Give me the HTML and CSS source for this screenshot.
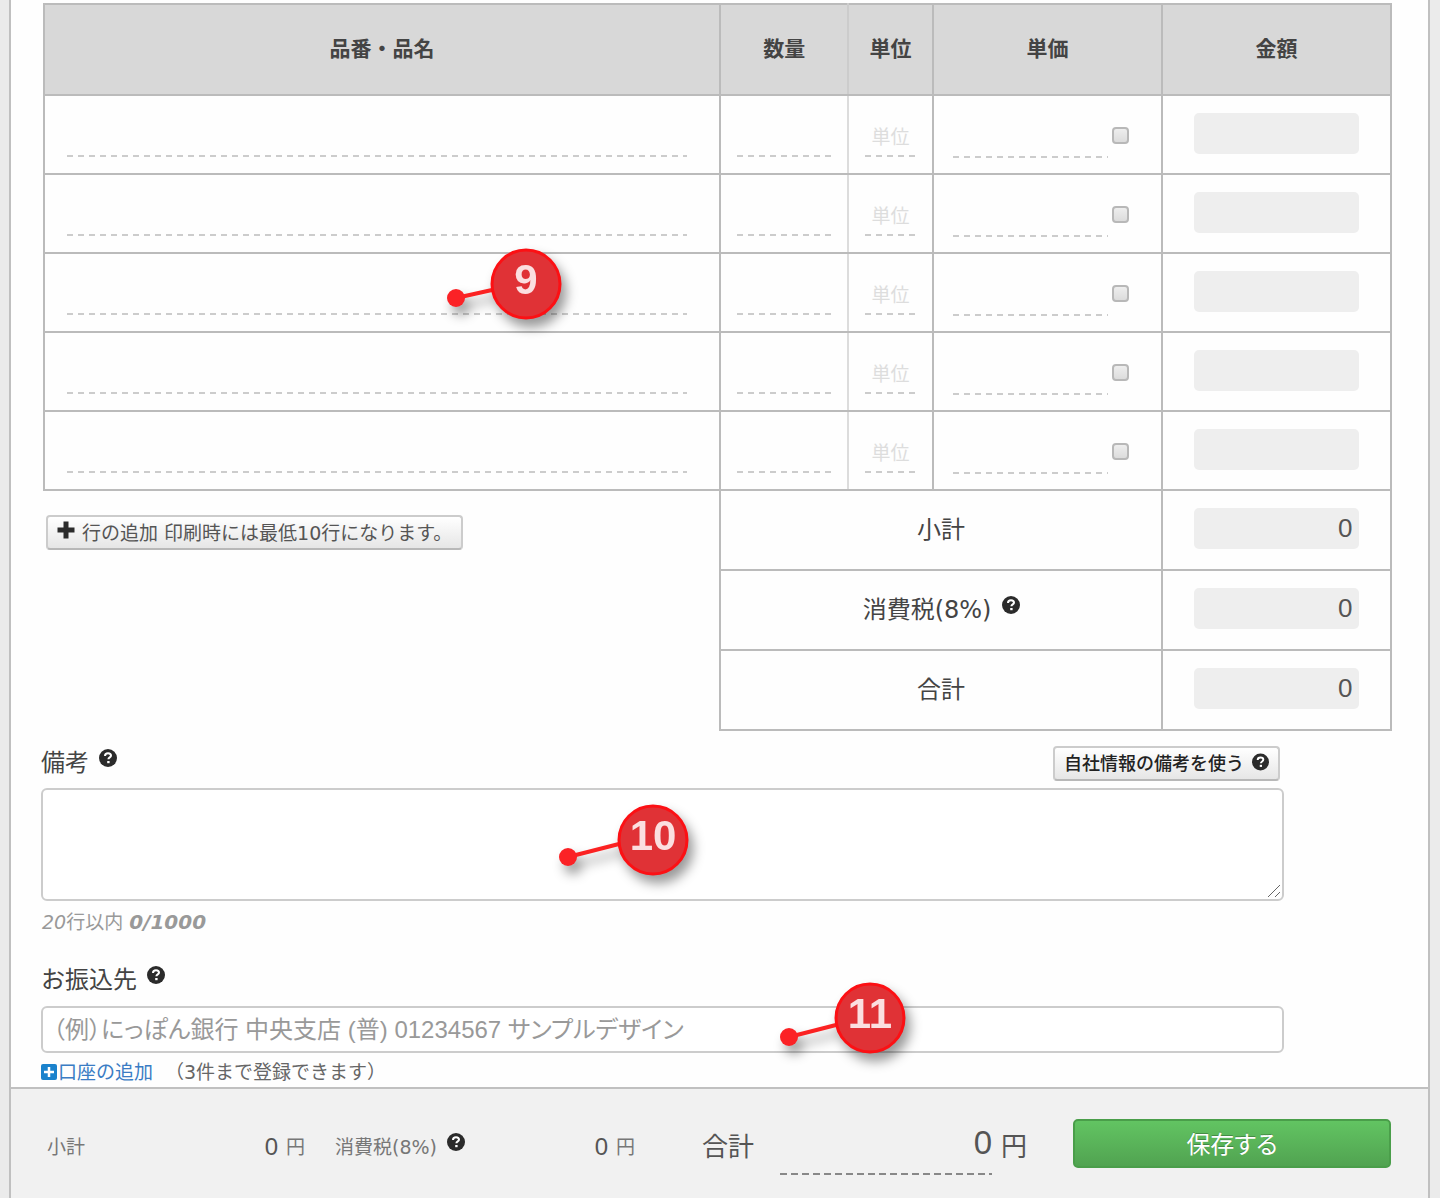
FILE: index.html
```html
<!DOCTYPE html>
<html lang="ja">
<head>
    <meta charset="UTF-8">
    <meta name="viewport" content="width=device-width, initial-scale=1.0">
    <title>請求書の作成</title>
    <link rel="stylesheet" href="styles.css">
</head>
<body>
    <!-- shared icons -->
    <svg class="icon-defs" aria-hidden="true">
        <symbol id="icon-help" viewBox="0 0 18 18">
            <circle cx="9" cy="9" r="9" fill="#2b2b2b"/>
            <path d="M6 6.9C6 5 7.300 4.200 9 4.200S12 5.100 12 6.700C12 8.400 9.400 8.400 9.400 10.300" fill="none" stroke="#fff" stroke-width="2"/>
            <rect x="8.200" y="12" width="2.400" height="2.200" fill="#fff"/>
        </symbol>
        <symbol id="icon-plus" viewBox="0 0 18 18">
            <path d="M6.500 0.500h5v6H17.500v5h-6V17.500h-5v-6h-6v-5h6z" fill="#2b2b2b"/>
        </symbol>
        <symbol id="icon-plus-box" viewBox="0 0 16 16">
            <rect width="16" height="16" rx="2" fill="#1a82cc"/>
            <path d="M8 3v10M3 8h10" stroke="#fff" stroke-width="2.500"/>
        </symbol>
    </svg>

    <form class="sheet">
        <div class="content">
            <table class="items">
                <colgroup>
                    <col class="col-name">
                    <col class="col-qty">
                    <col class="col-unit">
                    <col class="col-price">
                    <col class="col-amount">
                </colgroup>
                <thead>
                    <tr>
                        <th>品番・品名</th>
                        <th class="qty">数量</th>
                        <th class="unit">単位</th>
                        <th>単価</th>
                        <th>金額</th>
                    </tr>
                </thead>
                <tbody>
                    <tr class="item">
                        <td><input type="text" class="line name" aria-label="品番・品名"></td>
                        <td class="qty"><input type="text" class="line" aria-label="数量"></td>
                        <td class="unit"><input type="text" class="line" placeholder="単位" aria-label="単位"></td>
                        <td><div class="price"><input type="text" class="line" aria-label="単価"><input type="checkbox" aria-label="税込"></div></td>
                        <td class="amount"><input type="text" aria-label="金額" readonly></td>
                    </tr>
                    <tr class="item">
                        <td><input type="text" class="line name" aria-label="品番・品名"></td>
                        <td class="qty"><input type="text" class="line" aria-label="数量"></td>
                        <td class="unit"><input type="text" class="line" placeholder="単位" aria-label="単位"></td>
                        <td><div class="price"><input type="text" class="line" aria-label="単価"><input type="checkbox" aria-label="税込"></div></td>
                        <td class="amount"><input type="text" aria-label="金額" readonly></td>
                    </tr>
                    <tr class="item">
                        <td class="marked">
                            <input type="text" class="line name" aria-label="品番・品名">
                            <svg class="marker marker-9" width="120" height="80">
                                <path d="M10 50L46 42" class="marker-lead"/>
                                <circle cx="10" cy="50" r="9" class="marker-dot"/>
                                <circle cx="80" cy="36" r="34" class="marker-disc"/>
                                <text x="80" y="46" class="marker-num">9</text>
                            </svg>
                        </td>
                        <td class="qty"><input type="text" class="line" aria-label="数量"></td>
                        <td class="unit"><input type="text" class="line" placeholder="単位" aria-label="単位"></td>
                        <td><div class="price"><input type="text" class="line" aria-label="単価"><input type="checkbox" aria-label="税込"></div></td>
                        <td class="amount"><input type="text" aria-label="金額" readonly></td>
                    </tr>
                    <tr class="item">
                        <td><input type="text" class="line name" aria-label="品番・品名"></td>
                        <td class="qty"><input type="text" class="line" aria-label="数量"></td>
                        <td class="unit"><input type="text" class="line" placeholder="単位" aria-label="単位"></td>
                        <td><div class="price"><input type="text" class="line" aria-label="単価"><input type="checkbox" aria-label="税込"></div></td>
                        <td class="amount"><input type="text" aria-label="金額" readonly></td>
                    </tr>
                    <tr class="item">
                        <td><input type="text" class="line name" aria-label="品番・品名"></td>
                        <td class="qty"><input type="text" class="line" aria-label="数量"></td>
                        <td class="unit"><input type="text" class="line" placeholder="単位" aria-label="単位"></td>
                        <td><div class="price"><input type="text" class="line" aria-label="単価"><input type="checkbox" aria-label="税込"></div></td>
                        <td class="amount"><input type="text" aria-label="金額" readonly></td>
                    </tr>
                </tbody>
                <tbody>
                    <tr class="sum">
                        <td class="add-row" rowspan="3">
                            <button type="button" class="btn btn-add"><svg class="icon"><use href="#icon-plus"/></svg>行の追加 印刷時には最低10行になります。</button>
                        </td>
                        <td colspan="3"><label for="subtotal">小計</label></td>
                        <td class="amount"><input type="text" id="subtotal" value="0" readonly></td>
                    </tr>
                    <tr class="sum">
                        <td colspan="3">
                            <div class="with-help">
                                <label for="tax">消費税(8%)</label>
                                <svg class="icon"><use href="#icon-help"/></svg>
                            </div>
                        </td>
                        <td class="amount"><input type="text" id="tax" value="0" readonly></td>
                    </tr>
                    <tr class="sum">
                        <td colspan="3"><label for="total">合計</label></td>
                        <td class="amount"><input type="text" id="total" value="0" readonly></td>
                    </tr>
                </tbody>
            </table>

            <div class="group notes">
                <div class="group-head">
                    <div class="with-help">
                        <label for="notes">備考</label>
                        <svg class="icon"><use href="#icon-help"/></svg>
                    </div>
                    <button type="button" class="btn btn-own">自社情報の備考を使う<svg class="icon"><use href="#icon-help"/></svg></button>
                </div>
                <div class="field">
                    <textarea id="notes"></textarea>
                    <svg class="grip" viewBox="0 0 14 14"><path d="M1 13L13 1M8 13L13 8"/></svg>
                    <svg class="marker marker-10" width="140" height="80">
                        <path d="M10 53L61 40" class="marker-lead"/>
                        <circle cx="10" cy="53" r="9" class="marker-dot"/>
                        <circle cx="95" cy="36" r="34" class="marker-disc"/>
                        <text x="95" y="46" class="marker-num">10</text>
                    </svg>
                </div>
                <p class="hint"><em>20</em>行以内 <strong>0/1000</strong></p>
            </div>

            <div class="group bank">
                <div class="group-head">
                    <div class="with-help">
                        <label for="bank">お振込先</label>
                        <svg class="icon"><use href="#icon-help"/></svg>
                    </div>
                </div>
                <div class="field">
                    <input type="text" id="bank" placeholder="（例）にっぽん銀行 中央支店 (普) 01234567 サンプルデザイン">
                    <svg class="marker marker-11" width="140" height="80">
                        <path d="M10 55L57 43" class="marker-lead"/>
                        <circle cx="10" cy="55" r="9" class="marker-dot"/>
                        <circle cx="91" cy="36" r="34" class="marker-disc"/>
                        <text x="91" y="46" class="marker-num">11</text>
                    </svg>
                </div>
                <p class="add-bank">
                    <a href="#"><svg class="icon-box"><use href="#icon-plus-box"/></svg>口座の追加</a>
                    <span>（3件まで登録できます）</span>
                </p>
            </div>
        </div>

        <footer class="footer">
            <div class="foot-item foot-subtotal">
                <span>小計</span>
                <output>0</output>
                <span>円</span>
            </div>
            <div class="foot-item foot-tax">
                <div class="with-help">
                    <span>消費税(8%)</span>
                    <svg class="icon"><use href="#icon-help"/></svg>
                </div>
                <output>0</output>
                <span>円</span>
            </div>
            <div class="foot-item foot-total">
                <label for="grand">合計</label>
                <input type="text" id="grand" class="line" value="0">
                <span>円</span>
            </div>
            <button type="submit" class="btn-save">保存する</button>
        </footer>
    </form>
</body>
</html>
```

FILE: styles.css
```css
* {
    box-sizing: border-box;
}

body {
    margin: 0;
    background: #ebebeb;
    color: #444;
    font-family: "DejaVu Sans", "Noto Sans CJK JP", sans-serif;
    font-size: 24px;
    line-height: 34px;
}

input,
textarea,
button {
    margin: 0;
    font-family: "Liberation Sans", "Noto Sans CJK JP", sans-serif;
}

p {
    margin: 0;
}

.icon-defs {
    position: absolute;
    width: 0;
    height: 0;
}

.icon {
    flex: none;
    width: 18px;
    height: 18px;
}

.sheet {
    display: flex;
    flex-direction: column;
    min-height: 100vh;
    margin: 0 10px 0 9px;
    border: solid #c0c0c0;
    border-width: 0 2px;
    background: #fefefe;
}

.content {
    padding: 3px 36px 1px 30px;
}

/* items table */
.items {
    width: calc(100% - 2px);
    margin-left: 2px;
    border-collapse: collapse;
    table-layout: fixed;
}

.col-name { width: 50.2%; }
.col-qty { width: 9.5%; }
.col-unit { width: 6.3%; }
.col-price { width: 17%; }
.col-amount { width: 17%; }

.items th,
.items td {
    padding: 0;
    border: 2px solid #bbb;
    text-align: center;
}

.items th {
    height: 91px;
    padding-bottom: 2px;
    background: #d8d8d8;
    font-size: 21px;
    font-weight: bold;
}

.items .qty {
    border-right-color: #dcdcdc;
}

.items .unit {
    border-left-color: #dcdcdc;
}

.items th.qty {
    border-right-color: #ccc;
}

.item td {
    height: 79px;
}

.sum td {
    height: 80px;
}

.line {
    display: block;
    width: calc(100% - 32px);
    height: 44px;
    margin: 0 auto;
    padding: 0;
    border: 0;
    outline: 0;
    background: repeating-linear-gradient(to right, #ccc 0 6px, transparent 6px 11px) left bottom / 100% 2px no-repeat;
    font-size: 24px;
}

.line.name {
    width: calc(100% - 54px);
    margin-left: 22px;
}

.qty .line {
    width: 98px;
    margin-left: 16px;
}

.unit .line {
    width: 52px;
    padding-top: 6px;
    font-size: 19px;
    text-align: center;
}

.line::placeholder {
    color: #ddd;
}

.price {
    display: flex;
    align-items: center;
    gap: 4px;
    padding: 2px 32px 0 19px;
}

.price .line {
    flex: 1;
    width: auto;
    min-width: 0;
}

.price input[type="checkbox"] {
    appearance: none;
    flex: none;
    width: 17px;
    height: 17px;
    border: 2px solid #b8b8b8;
    border-radius: 4px;
    background: linear-gradient(#eee, #dcdcdc);
}

.amount input {
    display: block;
    width: 73%;
    height: 41px;
    margin: 0 auto 3px;
    padding: 0 7px;
    border: 0;
    border-radius: 5px;
    background: #eee;
    color: #555;
    font-size: 26px;
    text-align: right;
}

.items .add-row {
    padding: 24px 0 0 1px;
    border-bottom-color: transparent;
    border-left-color: transparent;
    text-align: left;
    vertical-align: top;
}

.with-help {
    display: flex;
    justify-content: center;
    gap: 10px;
}

.with-help .icon {
    margin-top: 3px;
}

.btn {
    display: flex;
    align-items: center;
    height: 35px;
    padding: 0 9px 3px;
    border: 2px solid #ccc;
    border-bottom-color: #b8b8b8;
    border-radius: 4px;
    background: linear-gradient(#fff, #e6e6e6);
}

.btn-add {
    gap: 7px;
    color: #555;
    font-family: "DejaVu Sans", "Noto Sans CJK JP", sans-serif;
    font-size: 19px;
}

.btn-add .icon {
    margin-bottom: 3px;
}

.btn-own {
    gap: 8px;
    margin-right: 4px;
    color: #222;
    font-size: 18px;
    font-weight: 500;
}

.btn-own .icon {
    width: 17px;
}

/* notes and bank account */
.group {
    width: 92%;
}

.notes {
    margin-top: 15px;
}

.bank {
    margin-top: 27px;
}

.group-head {
    display: flex;
    justify-content: space-between;
    margin-bottom: 7px;
}

.bank .group-head {
    margin-bottom: 9px;
}

.field,
.marked {
    position: relative;
}

.field textarea,
.field input {
    display: block;
    width: 100%;
    padding: 0 10px;
    border: 2px solid #ccc;
    border-radius: 6px;
    background: #fff;
    font-size: 24px;
}

.field textarea {
    height: 113px;
    resize: none;
}

.field input {
    height: 47px;
    font-feature-settings: "palt";
}

.field input::placeholder {
    color: #999;
}

.grip {
    position: absolute;
    right: 3px;
    bottom: 3px;
    width: 14px;
    height: 14px;
    fill: none;
    stroke: #666;
}

.hint {
    margin-top: 7px;
    padding-left: 1px;
    color: #999;
    font-size: 19px;
    line-height: 28px;
}

.hint strong {
    font-size: 20px;
    font-style: italic;
}

.add-bank {
    display: flex;
    gap: 12px;
    margin-top: 5px;
    color: #666;
    font-size: 19px;
    line-height: 28px;
}

.add-bank a {
    display: flex;
    align-items: center;
    gap: 1px;
    color: #3a7cc4;
    text-decoration: none;
}

.icon-box {
    width: 16px;
    height: 16px;
}

/* numbered callouts */
.marker {
    position: absolute;
    overflow: visible;
    filter: drop-shadow(5px 8px 6px rgba(0, 0, 0, 0.4));
    pointer-events: none;
}

.marker-9 {
    top: -6px;
    left: 401px;
}

.marker-10 {
    top: 16px;
    left: 517px;
}

.marker-11 {
    top: -24px;
    left: 738px;
}

.marker-lead {
    stroke: #fb2222;
    stroke-width: 4;
}

.marker-dot {
    fill: #fb2226;
}

.marker-disc {
    fill: #e03236;
    stroke: #fc1014;
    stroke-width: 3;
}

.marker-num {
    fill: #fbdfe0;
    font-family: "Liberation Sans", sans-serif;
    font-size: 42px;
    font-weight: bold;
    text-anchor: middle;
}

/* totals bar */
.footer {
    display: grid;
    flex: 1;
    grid-template-columns: 288fr 367fr 371fr 318fr;
    align-items: start;
    padding: 30px 37px 20px 36px;
    border-top: 2px solid #c0c0c0;
    background: #f1f1f1;
}

.foot-item {
    display: flex;
    align-items: center;
    height: 56px;
    color: #777;
    font-size: 19px;
}

.foot-item output {
    flex: 1;
    margin-right: 8px;
    color: #555;
    font-family: "Liberation Sans", sans-serif;
    font-size: 24px;
    text-align: right;
}

.foot-subtotal {
    padding-right: 30px;
}

.foot-tax {
    padding-right: 67px;
}

.foot-total {
    padding-right: 46px;
    color: #555;
    font-size: 26px;
}

.foot-total .line {
    flex: 1;
    min-width: 0;
    height: 56px;
    margin: 0 9px 0 26px;
    padding-bottom: 8px;
    background-image: repeating-linear-gradient(to right, #888 0 7px, transparent 7px 11px);
    color: #555;
    font-size: 33px;
    text-align: right;
}

.btn-save {
    height: 49px;
    padding-bottom: 4px;
    border: 2px solid #4a9e4a;
    border-radius: 5px;
    background: linear-gradient(#62c462, #51a351);
    color: #fff;
    font-size: 24px;
    font-feature-settings: "palt";
    text-shadow: 0 -1px 0 rgba(0, 0, 0, 0.25);
}
```
